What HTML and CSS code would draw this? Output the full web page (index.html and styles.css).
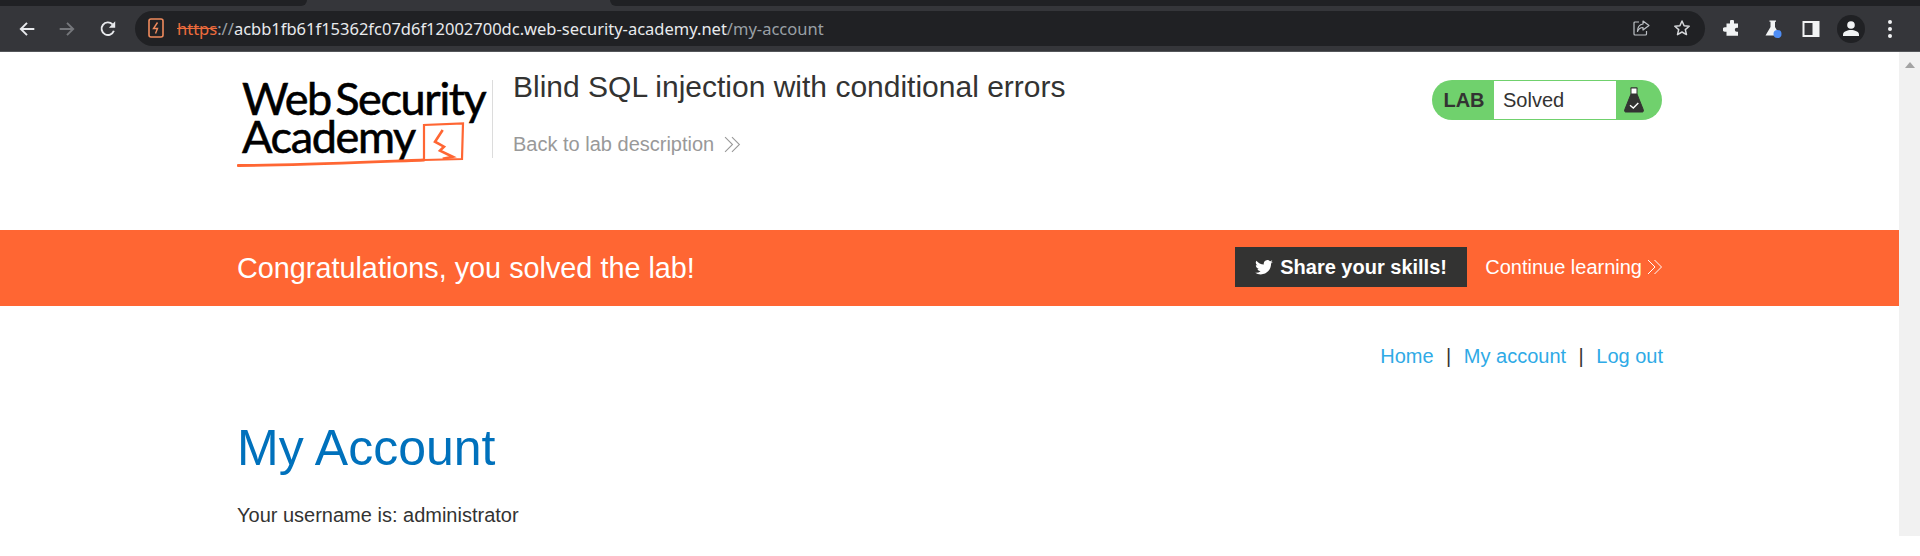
FILE: index.html
```html
<!DOCTYPE html>
<html lang="en">
<head>
<meta charset="utf-8">
<title>Blind SQL injection with conditional errors</title>
<link rel="stylesheet" href="styles.css">
</head>
<body>
<div class="tabstrip"><div class="tab-left"></div><div class="tab-right"></div></div>
<div class="toolbar">
  <svg class="nav nav-back" viewBox="0 0 16 16"><path d="M14.5 8H2.500M8 2.500 2.500 8 8 13.500" fill="none" stroke="#e8eaed" stroke-width="1.7"/></svg>
  <svg class="nav nav-fwd" viewBox="0 0 16 16"><path d="M1.500 8h12M8 2.500 13.500 8 8 13.500" fill="none" stroke="#75777b" stroke-width="1.7"/></svg>
  <svg class="nav nav-reload" viewBox="0 0 16 16"><path d="M13.200 9.600A5.600 5.600 0 1 1 12 3.900" fill="none" stroke="#e8eaed" stroke-width="1.7"/><path d="M14.400 1.200v5.600H8.800z" fill="#e8eaed"/></svg>
  <div class="omnibox">
    <svg class="lab-ico" viewBox="0 0 16 20"><rect x="1" y="1" width="14" height="18" rx="2" fill="none" stroke="#ee8a5c" stroke-width="1.6"/><path d="M9.500 4.500 5.500 10.500h4l-2 5" fill="none" stroke="#ee8a5c" stroke-width="1.4"/></svg>
    <div class="url"><span class="https">https</span><span class="dim">://</span>acbb1fb61f15362fc07d6f12002700dc.web-security-academy.net<span class="dim">/my-account</span></div>
    <svg class="omni-ico" viewBox="0 0 18 18"><path d="M7 3H3a1 1 0 0 0-1 1v11a1 1 0 0 0 1 1h10.500a1 1 0 0 0 1-1v-3" fill="none" stroke="#bdc1c6" stroke-width="1.200"/><path d="M11 2l6 4.500-6 4.500V8.500C8 8.500 6.500 10 5.500 12.500 5.500 8.500 7.500 5.500 11 5z" fill="none" stroke="#bdc1c6" stroke-width="1.200" stroke-linejoin="round"/></svg>
    <svg class="omni-ico star" viewBox="0 0 18 18"><path d="M9 2l2.100 4.700 5.100.500-3.900 3.400 1.200 5L9 13l-4.500 2.600 1.200-5-3.900-3.400 5.100-.500z" fill="none" stroke="#d5d7da" stroke-width="1.500" stroke-linejoin="round"/></svg>
  </div>
  <svg class="tool puzzle" viewBox="0 0 18 18"><path d="M7 1.500a2 2 0 0 1 4 0V3.500h4v4.200h-1.200a2 2 0 0 0 0 4H15v4H3.500v-4H2a2.200 2.200 0 0 1 0-4.400h1.500V3.500H7z" fill="#f1f3f4"/></svg>
  <svg class="tool flask" viewBox="0 0 20 20"><path d="M6.500 1.500h6.500v1.300h-1V8l5 8.500H2.500L7.500 8V2.800h-1z" fill="#f1f3f4"/><circle cx="14.500" cy="15" r="4" fill="#4e8df5"/></svg>
  <svg class="tool panel" viewBox="0 0 18 18"><rect x=".5" y="1" width="17" height="16" fill="#f1f3f4"/><rect x="2.500" y="3" width="8" height="12" fill="#35363a"/></svg>
  <div class="avatar"><svg viewBox="0 0 18 18"><circle cx="9" cy="5" r="3.800" fill="#f1f3f4"/><path d="M1 16v-1.500C1 11.500 5.500 10 9 10s8 1.500 8 4.500V16z" fill="#f1f3f4"/></svg></div>
  <div class="kebab"><i></i><i></i><i></i></div>
</div>
<div class="viewport">
  <main class="page">
    <header class="lab-head">
      <div class="logo">
        <div class="logo-text">Web Security<br>Academy</div>
        <svg class="logo-art" viewBox="0 0 240 90"><path d="M1 85.500C60 85.500 130 82 187 80" fill="none" stroke="#ff6633" stroke-width="2.800" stroke-linecap="round"/><path d="M187 80V45L226 43.500 225 79 187 80" fill="none" stroke="#ff6633" stroke-width="2.200"/><path d="M205.700 50 198 61.700 207 66.700 203 70.700 215.700 76.700 205.700 78.700" fill="none" stroke="#ff6633" stroke-width="2.600"/></svg>
      </div>
      <div class="lab-title">
        <h2>Blind SQL injection with conditional errors</h2>
        <a class="back">Back to lab description <svg class="chev-lg" viewBox="0 0 16 16"><path d="M1 1 8 8l-7 7M7.500 1l7 7-7 7" fill="none" stroke="currentColor"/></svg></a>
      </div>
      <div class="badge">
        <b class="badge-lab">LAB</b>
        <span class="badge-state">Solved</span>
        <span class="badge-icon"><svg viewBox="0 0 20 26"><path d="M6.500 1h7M7 1v6L.8 22.500A1.500 1.500 0 0 0 2.200 25h15.600a1.500 1.500 0 0 0 1.400-2.500L13 7V1z" fill="#333332" stroke="#333332"/><rect x="7.500" y="1.500" width="5" height="5" fill="#fff"/><path d="M6 18.300 9.300 21l5-5" fill="none" stroke="#fff" stroke-width="1.400"/></svg></span>
      </div>
    </header>
    <section class="banner">
      <div class="banner-in">
        <h4>Congratulations, you solved the lab!</h4>
        <a class="share"><svg viewBox="0 0 20 17"><path d="M20 2a8 8 0 0 1-2.400.7A4 4 0 0 0 19.400.4a8 8 0 0 1-2.600 1 4.100 4.100 0 0 0-7 3.700A11.600 11.600 0 0 1 1.400.8a4.100 4.100 0 0 0 1.300 5.500 4 4 0 0 1-1.900-.5v.1a4.100 4.100 0 0 0 3.300 4 4 4 0 0 1-1.800.1 4.100 4.100 0 0 0 3.800 2.800A8.200 8.200 0 0 1 0 14.500 11.600 11.600 0 0 0 6.300 16.300c7.500 0 11.700-6.200 11.700-11.700v-.5A8.300 8.300 0 0 0 20 2z" fill="#fff"/></svg>Share your skills!</a>
        <a class="continue">Continue learning <svg class="chev" viewBox="0 0 16 16"><path d="M1 1 8 8l-7 7M7.500 1l7 7-7 7" fill="none" stroke="currentColor"/></svg></a>
      </div>
    </section>
    <section class="content">
      <nav class="links"><a>Home</a><span>|</span><a>My account</a><span>|</span><a>Log out</a></nav>
      <h1>My Account</h1>
      <p>Your username is: administrator</p>
    </section>
  </main>
  <div class="scrollbar"><div class="arrow"></div></div>
</div>
</body>
</html>
```
FILE: styles.css
```css
* { box-sizing: border-box; }
html, body { margin: 0; padding: 0; height: 556px; overflow: hidden; background: #fff; }
body { font-family: "Liberation Sans", Arial, sans-serif; color: #333332; }
a { text-decoration: none; }

.tabstrip { height: 6px; background: #35363a; display: flex; justify-content: space-between; }
.tab-left { width: 307px; background: #202124; border-bottom-right-radius: 6px; }
.tab-right { width: 1310px; background: #202124; border-bottom-left-radius: 6px; }

.toolbar { height: 46px; background: #35363a; border-bottom: 1px solid #54565a; display: flex; align-items: center; padding-left: 18px; }
.nav { width: 18px; height: 18px; flex: none; }
.nav-fwd { margin-left: 22px; }
.nav-reload { margin-left: 23px; margin-right: 18px; }
.omnibox { width: 1570px; height: 35px; flex: none; margin-top: -1px; background: #202124; border-radius: 18px; display: flex; align-items: center; padding-left: 13px; }
.lab-ico { width: 16px; height: 20px; flex: none; margin-right: 13px; }
.url { flex: 1; font-family: "Noto Sans", sans-serif; font-size: 16.500px; color: #e8eaed; white-space: nowrap; }
.https { color: #ee6c3c; text-decoration: line-through; }
.dim { color: #9aa0a6; }
.omni-ico { width: 18px; height: 18px; flex: none; }
.star { margin-left: 23px; margin-right: 14px; }
.tool { flex: none; width: 18px; height: 18px; }
.puzzle { margin-left: 18px; }
.flask { margin-left: 22px; width: 20px; height: 20px; }
.panel { margin-left: 19px; }
.avatar { width: 28px; height: 28px; margin-left: 17px; border-radius: 50%; background: #202124; display: flex; align-items: center; justify-content: center; flex: none; }
.avatar svg { width: 18px; height: 18px; }
.kebab { margin-left: 23px; display: flex; flex-direction: column; gap: 3px; }
.kebab i { width: 4px; height: 4px; border-radius: 50%; background: #f1f3f4; display: block; }

.viewport { height: 484px; display: flex; }
.page { flex: none; width: 1899px; height: 484px; overflow: hidden; }
.scrollbar { flex: none; width: 21px; height: 484px; background: #f1f1f1; padding-top: 10px; display: flex; justify-content: center; }
.arrow { width: 0; height: 0; border-left: 5px solid transparent; border-right: 5px solid transparent; border-bottom: 6px solid #a3a3a3; }

.lab-head { height: 178px; padding: 28px 237px 0; display: flex; align-items: flex-start; position: relative; }
.logo { width: 255px; height: 84px; flex: none; position: relative; }
.logo-text { font-family: "Lato", sans-serif; font-weight: 400; font-size: 45px; line-height: 38px; color: #000; letter-spacing: -1.350px; word-spacing: -6px; -webkit-text-stroke: .6px #000; white-space: nowrap; padding-left: 5px; margin-top: -1px; }
.logo-art { position: absolute; left: 0; top: 0; width: 240px; height: 90px; }
.lab-title { padding-left: 20px; height: 78px; border-left: 1px solid #dcdcdc; flex: 1; }
.lab-title h2 { margin: -10px 0 0; font-size: 30px; font-weight: 400; line-height: 34px; color: #333332; }
.back { display: flex; align-items: center; gap: 10px; font-size: 20px; color: #999; margin-top: 28px; line-height: 24px; }
.chev { width: 16px; height: 16px; flex: none; }
.chev-lg { width: 17px; height: 17px; flex: none; }
.badge { flex: none; width: 230px; height: 40px; background: #70d16d; border-radius: 20px; display: flex; overflow: hidden; padding: 1px 0; }
.badge-lab { width: 62px; font-size: 20px; text-align: center; line-height: 38px; padding-left: 2px; color: #333332; }
.badge-state { width: 122px; background: #fff; font-size: 20px; line-height: 38px; padding-left: 9px; color: #333332; }
.badge-icon { flex: 1; display: flex; align-items: center; padding-left: 8px; }
.badge-icon svg { width: 20px; height: 26px; }

.banner { height: 76px; background: #ff6633; color: #fff; padding: 0 236px 0 237px; }
.banner-in { height: 100%; display: flex; align-items: center; }
.banner h4 { margin: 0; flex: 1; font-size: 28.800px; font-weight: 400; white-space: nowrap; }
.share { width: 232px; height: 40px; background: #333332; color: #fff; font-weight: 700; font-size: 20px; display: flex; align-items: center; padding-left: 20px; gap: 7px; margin-top: -2px; }
.share svg { width: 18px; height: 15px; flex: none; }
.continue { margin-left: 18px; display: flex; align-items: center; gap: 5px; color: #fff; font-size: 20px; margin-top: -2px; }

.content { padding: 0 236px 0 237px; }
.links { display: flex; justify-content: flex-end; padding-top: 38px; font-size: 20px; line-height: 24px; color: #333332; }
.links a { color: #2faae6; }
.links span { margin: 0 12.500px; }
.content h1 { margin: 50px 0 0; font-size: 50px; font-weight: 400; line-height: 60px; color: #0071bc; }
.content p { margin: 25px 0 0; font-size: 20px; line-height: 24px; color: #333332; }
```
